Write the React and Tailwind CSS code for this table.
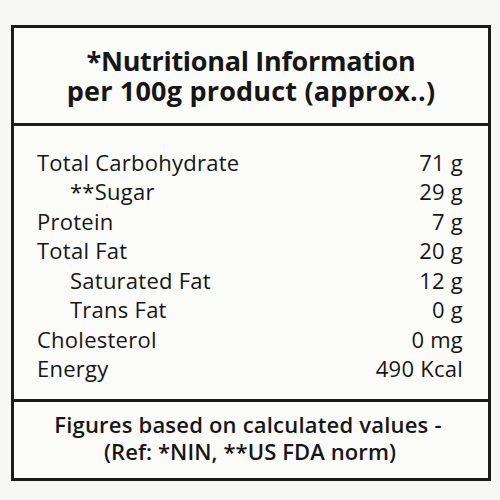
const rows = [
  { label: 'Total Carbohydrate', value: '71 g' },
  { label: '**Sugar', value: '29 g', sub: true },
  { label: 'Protein', value: '7 g' },
  { label: 'Total Fat', value: '20 g' },
  { label: 'Saturated Fat', value: '12 g', sub: true },
  { label: 'Trans Fat', value: '0 g', sub: true },
  { label: 'Cholesterol', value: '0 mg' },
  { label: 'Energy', value: '490 Kcal' },
];

export default function App() {
  return (
    <div
      className="w-[500px] h-[500px] bg-[#f7f7f6] pl-[11px] pt-[25px] text-[#161616]"
      style={{ fontFamily: '"Open Sans", "Liberation Sans", sans-serif' }}
    >
      <div className="w-[480px] h-[456px] border-[3px] border-[#1b1b1b] flex flex-col bg-[#fbfbfa]">
        {/* Header */}
        <div className="h-[98px] border-b-[3px] border-[#1b1b1b] flex flex-col items-center justify-center pt-[1px]">
          <div className="text-[27px] font-bold leading-[30px] tracking-[-0.3px]">*Nutritional Information</div>
          <div className="text-[27px] font-bold leading-[30px] tracking-[0.2px]">per 100g product (approx..)</div>
        </div>

        {/* Body */}
        <div className="flex-1 pt-[21px] pl-[23px] pr-[25px]">
          {rows.map((r) => (
            <div key={r.label} className="flex justify-between items-center h-[29.5px] text-[22px] leading-none tracking-[0.25px]">
              <span className={r.sub ? 'pl-[33px]' : ''}>{r.label}</span>
              <span>{r.value}</span>
            </div>
          ))}
        </div>

        {/* Footer */}
        <div className="h-[79px] border-t-[3px] border-[#1b1b1b] flex flex-col items-center justify-center pb-[4px]">
          <div className="text-[22px] font-semibold leading-[27px] tracking-[0.2px] pr-[6px]">Figures based on calculated values -</div>
          <div className="text-[22px] font-semibold leading-[27px] tracking-[0.1px] pr-[2px]">(Ref: *NIN, **US FDA norm)</div>
        </div>
      </div>
    </div>
  );
}
